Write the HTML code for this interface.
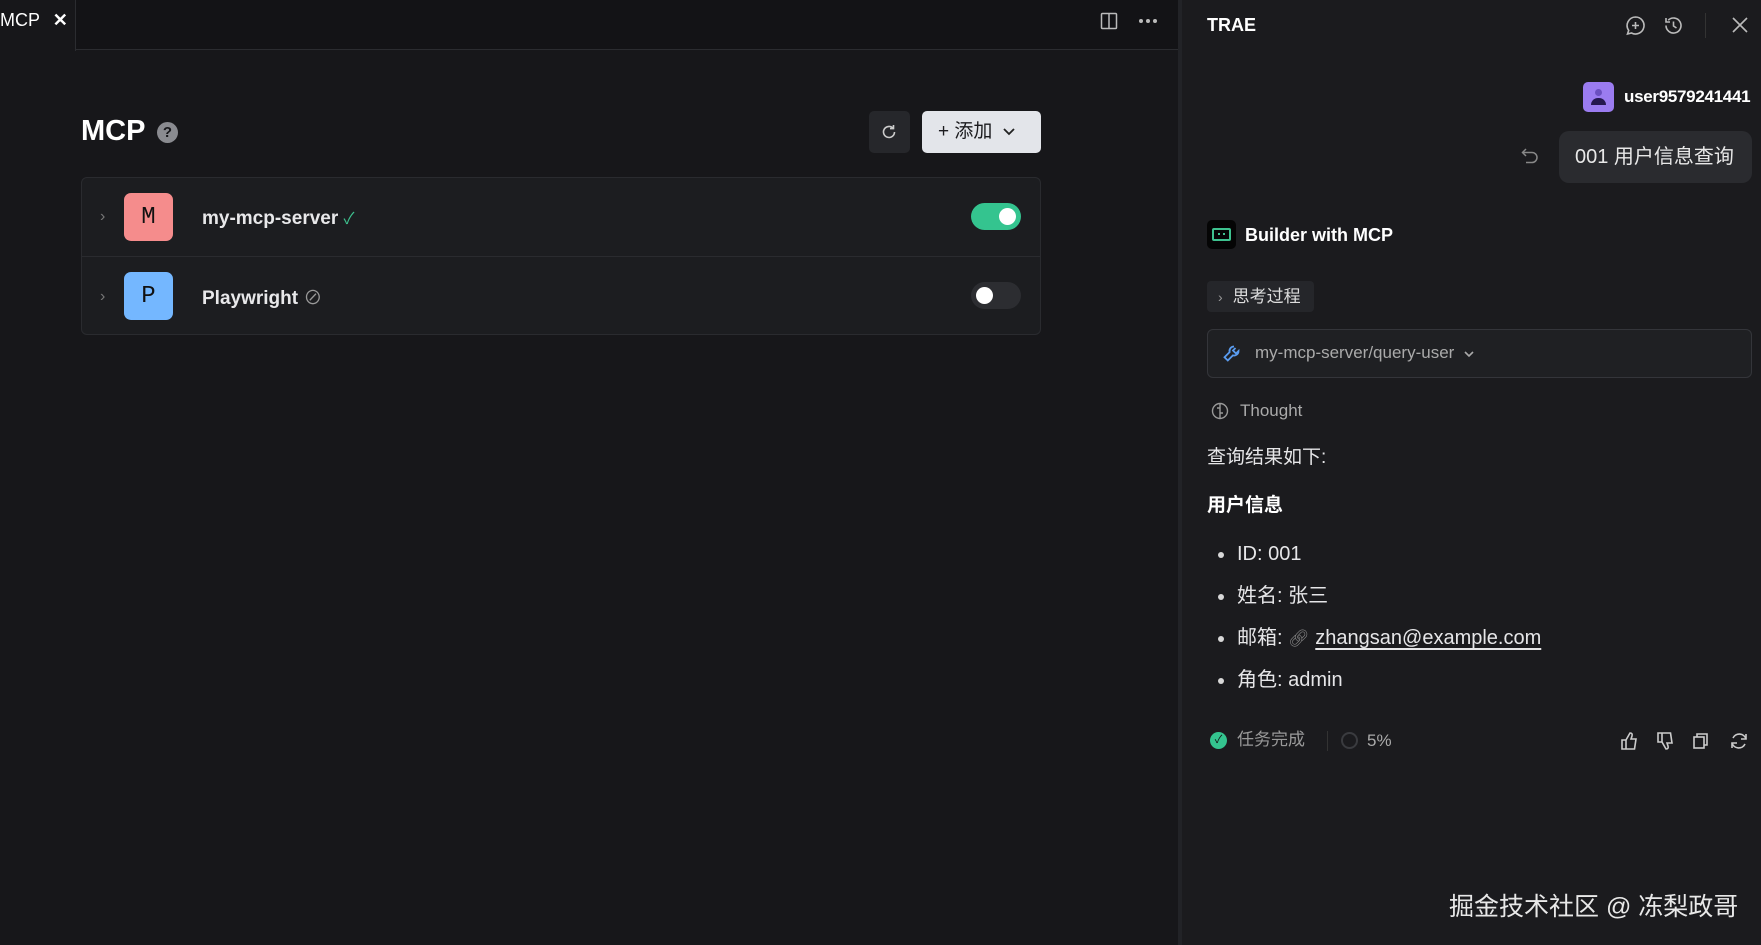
<!DOCTYPE html>
<html><head><meta charset="utf-8"><style>
*{margin:0;padding:0;box-sizing:border-box}
body{width:1761px;height:945px;overflow:hidden;background:#17171a;font-family:"Liberation Sans","Noto Sans CJK SC",sans-serif;color:#e6e6e8;position:relative}
.a{position:absolute}
.row{position:absolute;left:0;right:0;height:79px;display:flex;align-items:center}
.av{position:absolute;left:42px;width:49px;height:48px;border-radius:7px;color:#111;font-family:"Liberation Mono",monospace;font-size:24px;display:flex;align-items:center;justify-content:center}
.nm{position:absolute;left:120px;font-size:19px;font-weight:bold;color:#e8e8ea}
.chev{position:absolute;left:18px;color:#777;font-size:16px}
.li{position:absolute;left:1218px;font-size:20px;line-height:30px;height:30px;color:#e6e6e8}
.li:before{content:"";position:absolute;left:0;top:13px;width:6px;height:6px;border-radius:50%;background:#d8d8d8}
.li>span{margin-left:19px}
</style></head><body>
<div class="a" style="left:0;top:0;width:1178px;height:50px;background:#131316;border-bottom:1px solid #2b2c30"></div>
<div class="a" style="left:0;top:0;width:76px;height:51px;background:#17171a;border-right:1px solid #2b2c30"></div>
<div class="a" style="left:0;top:10px;font-size:18px;color:#fff">MCP <span style="margin-left:8px;font-weight:bold">✕</span></div>
<svg class="a" style="left:1100px;top:12px" width="18" height="18" viewBox="0 0 18 18" fill="none" stroke="#bbb" stroke-width="1.5"><rect x="1.5" y="1.5" width="15" height="15" rx="1"/><line x1="9" y1="1.5" x2="9" y2="16.5"/></svg>
<svg class="a" style="left:1138px;top:18px" width="20" height="6" viewBox="0 0 20 6" fill="#bbb"><circle cx="3" cy="3" r="2"/><circle cx="10" cy="3" r="2"/><circle cx="17" cy="3" r="2"/></svg>
<div class="a" style="left:1178px;top:0;width:4px;height:945px;background:#222327"></div>
<div class="a" style="left:1182px;top:0;width:579px;height:945px;background:#1b1b1e"></div>
<div class="a" style="left:81px;top:115px;font-size:29px;font-weight:bold;color:#fff">MCP</div>
<div class="a" style="left:157px;top:122px;width:21px;height:21px;border-radius:50%;background:#8a8b90;color:#17171a;font-size:15px;font-weight:bold;text-align:center;line-height:21px">?</div>
<div class="a" style="left:869px;top:111px;width:41px;height:42px;border-radius:5px;background:#26272b"></div>
<svg class="a" style="left:880px;top:123px" width="18" height="18" viewBox="0 0 18 18" fill="none" stroke="#ccc" stroke-width="1.6"><path d="M14.5 9a5.5 5.5 0 1 1-1.6-3.9"/><path d="M13.5 2v3.6H10"/></svg>
<div class="a" style="left:922px;top:111px;width:119px;height:42px;border-radius:5px;background:#e3e5ea;color:#1b1b1e;font-size:19px;line-height:42px;padding-left:16px">+ 添加 <svg width="14" height="10" viewBox="0 0 14 10" fill="none" stroke="#222" stroke-width="1.8" style="margin-left:4px"><path d="M2 2l5 5 5-5"/></svg></div>
<div class="a" style="left:81px;top:177px;width:960px;height:158px;border:1px solid #2a2b2f;border-radius:6px;background:#1c1d20">
 <div class="row" style="top:0;border-bottom:1px solid #2a2b2f">
  <span class="chev">›</span><div class="av" style="top:15px;background:#f58c8c">M</div>
  <span class="nm">my-mcp-server <span style="color:#3ec28f;font-weight:normal;font-size:16px">✓</span></span>
  <div class="a" style="left:889px;top:25px;width:50px;height:27px;border-radius:14px;background:#34c48f"><div class="a" style="right:5px;top:5px;width:17px;height:17px;border-radius:50%;background:#fff"></div></div>
 </div>
 <div class="row" style="top:79px">
  <span class="chev">›</span><div class="av" style="top:15px;background:#74b7ff">P</div>
  <span class="nm">Playwright <span style="color:#999;font-weight:normal">⊘</span></span>
  <div class="a" style="left:889px;top:25px;width:50px;height:27px;border-radius:14px;background:#2c2d31"><div class="a" style="left:5px;top:5px;width:17px;height:17px;border-radius:50%;background:#fff"></div></div>
 </div>
</div>
<div class="a" style="left:1207px;top:15px;font-size:18px;font-weight:bold;color:#fff">TRAE</div>
<svg class="a" style="left:1625px;top:15px" width="21" height="21" viewBox="0 0 21 21" fill="none" stroke="#bbb" stroke-width="1.6"><path d="M10.5 2a8.5 8.5 0 1 1-4 16l-4 1 1.2-3.6A8.5 8.5 0 0 1 10.5 2z"/><path d="M10.5 7v7M7 10.5h7"/></svg>
<svg class="a" style="left:1663px;top:15px" width="21" height="21" viewBox="0 0 21 21" fill="none" stroke="#bbb" stroke-width="1.6"><path d="M3 10.5a7.5 7.5 0 1 0 2.2-5.3"/><path d="M3 3v4h4"/><path d="M10.5 6.5v4.5l3 2"/></svg>
<div class="a" style="left:1705px;top:13px;width:1px;height:25px;background:#333"></div>
<svg class="a" style="left:1731px;top:16px" width="18" height="18" viewBox="0 0 18 18" stroke="#bbb" stroke-width="1.6"><path d="M2 2l14 14M16 2L2 16"/></svg>
<div class="a" style="left:1583px;top:82px;width:31px;height:30px;border-radius:5px;background:#9b7cf0"><div class="a" style="left:12px;top:7px;width:7px;height:7px;border-radius:50%;background:#6b50c0"></div><div class="a" style="left:8px;top:16px;width:15px;height:7px;border-radius:7px 7px 0 0;background:#25184f"></div></div>
<div class="a" style="left:1624px;top:87px;font-size:17px;font-weight:bold;color:#fff;letter-spacing:-0.3px">user9579241441</div>
<svg class="a" style="left:1521px;top:148px" width="18" height="16" viewBox="0 0 18 16" fill="none" stroke="#888" stroke-width="1.5"><path d="M5 1L1.5 4.5 5 8"/><path d="M1.5 4.5H11a5 5 0 0 1 0 10H5"/></svg>
<div class="a" style="left:1559px;top:131px;width:193px;height:52px;border-radius:10px;background:#2a2b2f;font-size:20px;line-height:52px;padding-left:16px;color:#e8e8e8">001 用户信息查询</div>
<div class="a" style="left:1207px;top:220px;width:29px;height:29px;border-radius:5px;background:#050505"><div class="a" style="left:5px;top:8px;width:19px;height:13px;border:2px solid #3ec28f;border-radius:2px"></div><div class="a" style="left:11px;top:13px;width:2px;height:2px;background:#3ec28f"></div><div class="a" style="left:16px;top:13px;width:2px;height:2px;background:#3ec28f"></div></div>
<div class="a" style="left:1245px;top:225px;font-size:18px;font-weight:bold;color:#fff">Builder with MCP</div>
<div class="a" style="left:1207px;top:281px;width:107px;height:31px;border-radius:4px;background:#25262a;font-size:17px;line-height:31px;color:#ddd"><span style="margin:0 10px 0 11px;color:#999;font-size:14px">›</span>思考过程</div>
<div class="a" style="left:1207px;top:329px;width:545px;height:49px;border:1px solid #34353a;border-radius:6px;background:#1f2023"></div>
<svg class="a" style="left:1222px;top:344px" width="19" height="19" viewBox="0 0 19 19" fill="none" stroke="#5a9cf0" stroke-width="1.8"><path d="M12 2.5a4.5 4.5 0 0 0-4.4 5.6L2.5 13.2l3.3 3.3 5.1-5.1A4.5 4.5 0 0 0 16.5 7l-2.5 2.5-3-3L13.5 4"/></svg>
<div class="a" style="left:1255px;top:343px;font-size:17px;color:#aaa">my-mcp-server/query-user <svg width="12" height="8" viewBox="0 0 12 8" fill="none" stroke="#aaa" stroke-width="1.6" style="margin-left:4px"><path d="M2 2l4 4 4-4"/></svg></div>
<svg class="a" style="left:1211px;top:402px" width="18" height="18" viewBox="0 0 18 18" fill="none" stroke="#999" stroke-width="1.4"><circle cx="9" cy="9" r="7.5"/><path d="M9 1.5v15M9 6h-3M9 11h3"/></svg>
<div class="a" style="left:1240px;top:401px;font-size:17px;color:#aaa">Thought</div>
<div class="a" style="left:1207px;top:444px;font-size:19px;line-height:28px;color:#e6e6e8">查询结果如下:</div>
<div class="a" style="left:1207px;top:492px;font-size:19px;line-height:28px;font-weight:bold;color:#fff">用户信息</div>
<div class="li" style="top:539px"><span>ID: 001</span></div>
<div class="li" style="top:581px"><span>姓名: 张三</span></div>
<div class="li" style="top:623px"><span>邮箱: <span style="color:#888;font-size:17px">🔗︎</span> <span style="text-decoration:underline;text-underline-offset:4px">zhangsan@example.com</span></span></div>
<div class="li" style="top:665px"><span>角色: admin</span></div>
<div class="a" style="left:1210px;top:732px;width:17px;height:17px;border-radius:50%;background:#34c48f;color:#111;font-size:11px;text-align:center;line-height:17px">✓</div>
<div class="a" style="left:1237px;top:728px;font-size:17px;line-height:24px;color:#999">任务完成</div>
<div class="a" style="left:1327px;top:731px;width:1px;height:20px;background:#333"></div>
<div class="a" style="left:1341px;top:732px;width:17px;height:17px;border-radius:50%;border:2px solid #3a3b3f"></div>
<div class="a" style="left:1367px;top:731px;font-size:17px;color:#aaa">5%</div>
<svg class="a" style="left:1620px;top:731px" width="150" height="20" viewBox="0 0 150 20" fill="none" stroke="#ccc" stroke-width="1.6"><path d="M2 9h4v9H2zM6 9l4-7c2 0 2.5 1 2 3l-1 3h5l-1.5 10H6"/><path d="M38 11h4V2h-4zM42 11l4 7c2 0 2.5-1 2-3l-1-3h5L50.5 2H42"/><rect x="74" y="6" width="10" height="11"/><path d="M77 6V3h10v11h-3"/><path d="M126 8a7 7 0 0 0-13-1M112 12a7 7 0 0 0 13 1"/><path d="M126 3v5h-5M112 17v-5h5"/></svg>
<div class="a" style="left:1449px;top:887px;font-size:25px;color:#e8e8e8">掘金技术社区 @ 冻梨政哥</div>
</body></html>
